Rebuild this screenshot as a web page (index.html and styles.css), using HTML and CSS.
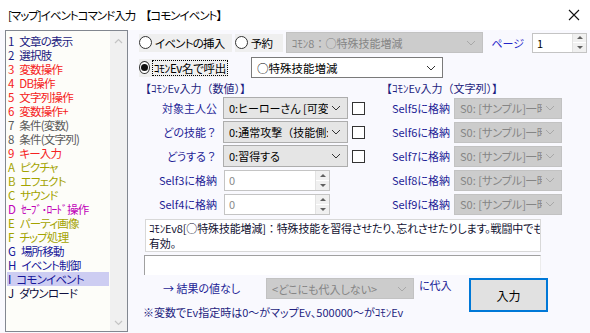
FILE: index.html
```html
<!DOCTYPE html>
<html lang="ja">
<head>
    <meta charset="UTF-8">
    <title>[マップ]イベントコマンド入力</title>
    <link rel="stylesheet" href="styles.css">
</head>
<body>
    <div class="window">
        <div class="titlebar">
            <span class="title">[マップ]イベントコマンド入力<span class="fw">　【</span>コモンイベント<span class="fw">】</span></span>
            <svg class="close" width="12" height="12" viewBox="0 0 12 12">
                <path d="M1 1L11 11M11 1L1 11" stroke="#111" stroke-width="1.1" fill="none"/>
            </svg>
        </div>
        <div class="client">
            <div class="cmdlist">
                <ul class="items">
                    <li class="navy">1 文章の表示</li>
                    <li class="navy">2 選択肢</li>
                    <li class="red">3 変数操作</li>
                    <li class="red">4 DB操作</li>
                    <li class="red">5 文字列操作</li>
                    <li class="red">6 変数操作+</li>
                    <li class="gray">7 条件(変数)</li>
                    <li class="gray">8 条件(文字列)</li>
                    <li class="red">9 キー入力</li>
                    <li class="olive">A ピクチャ</li>
                    <li class="olive">B エフェクト</li>
                    <li class="olive">C サウンド</li>
                    <li class="magenta">D ｾｰﾌﾞ･ﾛｰﾄﾞ操作</li>
                    <li class="olive">E パーティ画像</li>
                    <li class="olive">F チップ処理</li>
                    <li class="blue">G 場所移動</li>
                    <li class="blue">H イベント制御</li>
                    <li class="blue selected">I コモンイベント</li>
                    <li class="dark">J ダウンロード</li>
                </ul>
                <div class="vscroll">
                    <svg width="9" height="6" viewBox="0 0 9 6"><path d="M1 5L4.5 1.5L8 5" stroke="#c4c4c4" stroke-width="1.2" fill="none"/></svg>
                    <svg width="9" height="6" viewBox="0 0 9 6"><path d="M1 1L4.5 4.5L8 1" stroke="#c4c4c4" stroke-width="1.2" fill="none"/></svg>
                </div>
            </div>

            <div class="panel">
                <div class="row row-top">
                    <label class="radio radio-insert"><span class="dot"></span>イベントの挿入</label>
                    <label class="radio radio-reserve"><span class="dot"></span>予約</label>
                    <div class="combo disabled combo-reserve">
                        <span class="value">ｺﾓﾝ8<span class="fw">：</span>○特殊技能増減</span>
                        <svg class="chev" width="10" height="6" viewBox="0 0 10 6"><path d="M1 1L5 5L9 1" stroke="#a8a8a8" fill="none"/></svg>
                    </div>
                    <span class="label page-label">ページ</span>
                    <div class="spin page-spin">
                        <span class="value">1</span>
                        <div class="spin-btns"><span class="up"></span><span class="down"></span></div>
                    </div>
                </div>

                <div class="row row-call">
                    <label class="radio radio-call checked"><span class="dot"></span><span class="focus">ｺﾓﾝEv名で呼出</span></label>
                    <div class="combo white combo-call">
                        <span class="value">○特殊技能増減</span>
                        <svg class="chev" width="10" height="6" viewBox="0 0 10 6"><path d="M1 1L5 5L9 1" stroke="#333" fill="none"/></svg>
                    </div>
                </div>

                <div class="args">
                    <div class="col col-num">
                        <div class="heading">【ｺﾓﾝEv入力（数値）】</div>
                        <div class="arg">
                            <span class="label arg-label">対象主人公</span>
                            <div class="combo gray combo-arg">
                                <span class="value">0:ヒーローさん [可変0:主人公]</span>
                                <svg class="chev" width="10" height="6" viewBox="0 0 10 6"><path d="M1 1L5 5L9 1" stroke="#333" fill="none"/></svg>
                            </div>
                            <span class="check"></span>
                        </div>
                        <div class="arg">
                            <span class="label arg-label">どの技能<span class="fw">？</span></span>
                            <div class="combo gray combo-arg">
                                <span class="value">0:通常攻撃<span class="fw">（</span>技能側:通常攻撃）</span>
                                <svg class="chev" width="10" height="6" viewBox="0 0 10 6"><path d="M1 1L5 5L9 1" stroke="#333" fill="none"/></svg>
                            </div>
                            <span class="check"></span>
                        </div>
                        <div class="arg">
                            <span class="label arg-label">どうする<span class="fw">？</span></span>
                            <div class="combo gray combo-arg">
                                <span class="value">0:習得する</span>
                                <svg class="chev" width="10" height="6" viewBox="0 0 10 6"><path d="M1 1L5 5L9 1" stroke="#333" fill="none"/></svg>
                            </div>
                            <span class="check"></span>
                        </div>
                        <div class="arg">
                            <span class="label arg-label">Self3に格納</span>
                            <div class="spin arg-spin">
                                <span class="value">0</span>
                                <div class="spin-btns"><span class="up"></span><span class="down"></span></div>
                            </div>
                        </div>
                        <div class="arg">
                            <span class="label arg-label">Self4に格納</span>
                            <div class="spin arg-spin">
                                <span class="value">0</span>
                                <div class="spin-btns"><span class="up"></span><span class="down"></span></div>
                            </div>
                        </div>
                    </div>

                    <div class="col col-str">
                        <div class="heading">【ｺﾓﾝEv入力（文字列）】</div>
                        <div class="arg">
                            <span class="label str-label">Self5に格納</span>
                            <div class="combo disabled combo-str"><span class="value">S0: [サンプル]一時</span><svg class="chev" width="10" height="6" viewBox="0 0 10 6"><path d="M1 1L5 5L9 1" stroke="#a8a8a8" fill="none"/></svg></div>
                        </div>
                        <div class="arg">
                            <span class="label str-label">Self6に格納</span>
                            <div class="combo disabled combo-str"><span class="value">S0: [サンプル]一時</span><svg class="chev" width="10" height="6" viewBox="0 0 10 6"><path d="M1 1L5 5L9 1" stroke="#a8a8a8" fill="none"/></svg></div>
                        </div>
                        <div class="arg">
                            <span class="label str-label">Self7に格納</span>
                            <div class="combo disabled combo-str"><span class="value">S0: [サンプル]一時</span><svg class="chev" width="10" height="6" viewBox="0 0 10 6"><path d="M1 1L5 5L9 1" stroke="#a8a8a8" fill="none"/></svg></div>
                        </div>
                        <div class="arg">
                            <span class="label str-label">Self8に格納</span>
                            <div class="combo disabled combo-str"><span class="value">S0: [サンプル]一時</span><svg class="chev" width="10" height="6" viewBox="0 0 10 6"><path d="M1 1L5 5L9 1" stroke="#a8a8a8" fill="none"/></svg></div>
                        </div>
                        <div class="arg">
                            <span class="label str-label">Self9に格納</span>
                            <div class="combo disabled combo-str"><span class="value">S0: [サンプル]一時</span><svg class="chev" width="10" height="6" viewBox="0 0 10 6"><path d="M1 1L5 5L9 1" stroke="#a8a8a8" fill="none"/></svg></div>
                        </div>
                    </div>
                </div>

                <div class="desc">ｺﾓﾝEv8[○特殊技能増減]<span class="fw">：</span>特殊技能を習得させたり、忘れさせたりします。戦闘中でも<br>有効。</div>
                <div class="memo"></div>

                <div class="bottom">
                    <div class="bottom-left">
                        <div class="result">
                            <span class="label result-label">→ 結果の値なし</span>
                            <div class="combo disabled combo-result">
                                <span class="value">&lt;どこにも代入しない&gt;</span>
                                <svg class="chev" width="10" height="6" viewBox="0 0 10 6"><path d="M1 1L5 5L9 1" stroke="#a8a8a8" fill="none"/></svg>
                            </div>
                            <span class="label assign">に代入</span>
                        </div>
                        <div class="note">※変数でEv指定時は0～がマップEv、500000～がｺﾓﾝEv</div>
                    </div>
                    <button class="ok">入力</button>
                </div>
            </div>
        </div>
    </div>
</body>
</html>
```

FILE: styles.css
```css
* {
    box-sizing: border-box;
}
body {
    margin: 0;
    font-family: "Noto Sans CJK JP", "Noto Sans", sans-serif;
    font-size: 11px;
    font-feature-settings: "palt";
    color: #000;
}
.fw {
    font-feature-settings: normal;
}
.window {
    width: 590px;
    height: 333px;
    background-color: #f9f9fe;
    overflow: hidden;
}
.titlebar {
    height: 30px;
    background-color: #fff;
    display: flex;
    align-items: center;
    justify-content: space-between;
    padding: 0 10px 0 8px;
}
.title {
    font-size: 11.5px;
    letter-spacing: -1px;
    color: #000;
}
.client {
    display: flex;
    padding-left: 5px;
}

/* command list */
.cmdlist {
    width: 123px;
    height: 302px;
    border: 1px solid #828790;
    background-color: #fdfdf9;
    display: flex;
}
.items {
    list-style: none;
    margin: 0;
    padding: 3px 0 0 1px;
    flex: 1;
    font-size: 11.5px;
    letter-spacing: -0.8px;
    word-spacing: 4px;
}
.items li {
    height: 14px;
    line-height: 14px;
    padding-left: 1px;
    white-space: nowrap;
}
.items .navy { color: #1a1a80; }
.items .red { color: #f52222; }
.items .gray { color: #5a5a5a; }
.items .olive { color: #a3a300; }
.items .magenta { color: #c000b8; }
.items .blue { color: #16169a; }
.items .dark { color: #101040; }
.items .selected {
    background-color: #cdcdf2;
    margin-right: 1px;
}
.vscroll {
    width: 17px;
    background-color: #f0f0f0;
    display: flex;
    flex-direction: column;
    justify-content: space-between;
    align-items: center;
    padding: 7px 0 5px;
}

/* right panel */
.panel {
    margin-left: 9px;
    width: 450px;
    padding-top: 2px;
}
.row {
    display: flex;
    align-items: center;
    height: 21px;
}
.row-call {
    margin-top: 4px;
}
.radio {
    display: flex;
    align-items: center;
    height: 18px;
    background-color: #efefef;
    white-space: nowrap;
    font-size: 11.5px;
    letter-spacing: -0.8px;
}
.dot {
    width: 13px;
    height: 13px;
    border: 1px solid #333;
    border-radius: 50%;
    background-color: #fff;
    margin-right: 3px;
    display: flex;
    align-items: center;
    justify-content: center;
}
.checked .dot::after {
    content: "";
    width: 7px;
    height: 7px;
    border-radius: 50%;
    background-color: #111;
}
.focus {
    border: 1px dotted #000;
    line-height: 14px;
    padding: 0 1px;
    letter-spacing: -0.3px;
}
.radio-insert {
    margin-left: 2px;
    width: 93px;
}
.radio-reserve {
    margin-left: 3px;
    width: 48px;
}
.radio-call {
    margin-left: 2px;
    width: 89px;
}
.radio-call .dot {
    margin-right: 2px;
}

.combo {
    display: flex;
    align-items: center;
    justify-content: space-between;
    height: 21px;
    padding: 0 6px 0 5px;
    border: 1px solid #adadad;
    overflow: hidden;
}
.combo .value {
    white-space: nowrap;
    overflow: hidden;
    flex: 1;
}
.chev {
    flex: none;
    margin-left: 3px;
}
.combo.disabled {
    background-color: #cccccc;
    border-color: #c2c2c2;
    color: #858585;
}
.combo.white {
    background-color: #fff;
    border-color: #7a7a7a;
    font-size: 11.5px;
}
.combo.gray {
    background-color: #e5e5e5;
    border-color: #adadad;
    height: 22px;
}
.combo-reserve {
    margin-left: 3px;
    width: 197px;
}
.combo-call {
    margin-left: 23px;
    width: 192px;
}
.label {
    color: #1e1e96;
    white-space: nowrap;
}
.page-label {
    margin-left: 9px;
    color: #2424c8;
}

.spin {
    display: flex;
    align-items: stretch;
    height: 20px;
    border: 1px solid #c4c4c4;
    background-color: #fff;
}
.spin .value {
    flex: 1;
    padding-left: 4px;
    line-height: 18px;
}
.spin-btns {
    width: 14px;
    display: flex;
    flex-direction: column;
    border-left: 1px solid #e2e2e2;
}
.spin-btns span {
    flex: 1;
    background-color: #f0f0f0;
    display: flex;
    align-items: center;
    justify-content: center;
}
.spin-btns .up {
    border-bottom: 1px solid #fff;
}
.spin-btns .up::after {
    content: "";
    border-left: 3px solid transparent;
    border-right: 3px solid transparent;
    border-bottom: 3px solid #606060;
}
.spin-btns .down::after {
    content: "";
    border-left: 3px solid transparent;
    border-right: 3px solid transparent;
    border-top: 3px solid #606060;
}
.page-spin {
    margin-left: 8px;
    width: 55px;
}
.arg-spin {
    margin-left: 7px;
    width: 106px;
    height: 21px;
}
.arg-spin .value {
    color: #8a8a8a;
    line-height: 19px;
}

/* argument grid */
.args {
    display: grid;
    grid-template-columns: 241px 1fr;
    margin-top: 4px;
}
.heading {
    height: 15px;
    line-height: 13px;
    color: #1e1e80;
    padding-left: 3px;
    font-feature-settings: normal;
}
.arg {
    display: flex;
    align-items: center;
    height: 22px;
    margin-bottom: 2px;
}
.arg-label {
    width: 80px;
    text-align: right;
}
.combo-arg {
    margin-left: 6px;
    width: 125px;
}
.check {
    width: 13px;
    height: 13px;
    border: 1px solid #333;
    background-color: #fff;
    margin-left: 4px;
}
.str-label {
    width: 72px;
    text-align: right;
}
.combo-str {
    margin-left: 4px;
    width: 108px;
}

/* description */
.desc {
    margin: 2px 0 0 8px;
    width: 396px;
    height: 33px;
    padding: 1px 3px;
    font-size: 11px;
    line-height: 15px;
    letter-spacing: -0.15px;
    white-space: nowrap;
    overflow: hidden;
    color: #101030;
    background-color: #fff;
    border: 1px solid #d8d8d8;
}
.memo {
    margin: 3px 0 0 7px;
    width: 397px;
    height: 20px;
    background-color: #fff;
    border-top: 1px solid #a0a0a0;
    border-left: 1px solid #a0a0a0;
    border-right: 1px solid #ececec;
}

.bottom {
    display: flex;
    margin-top: 3px;
}
.bottom-left {
    width: 332px;
}
.result {
    display: flex;
    align-items: flex-start;
    height: 21px;
}
.result-label {
    margin-left: 26px;
    width: 103px;
    line-height: 21px;
}
.combo-result {
    width: 148px;
}
.assign {
    margin-left: 5px;
    line-height: 14px;
}
.note {
    margin: 6px 0 0 6px;
    color: #1e1e80;
    white-space: nowrap;
    line-height: 14px;
}
.ok {
    width: 79px;
    height: 34px;
    background-color: #e1e1e1;
    border: 2px solid #0078d7;
    font-family: inherit;
    font-size: 12px;
    color: #000;
}
```
